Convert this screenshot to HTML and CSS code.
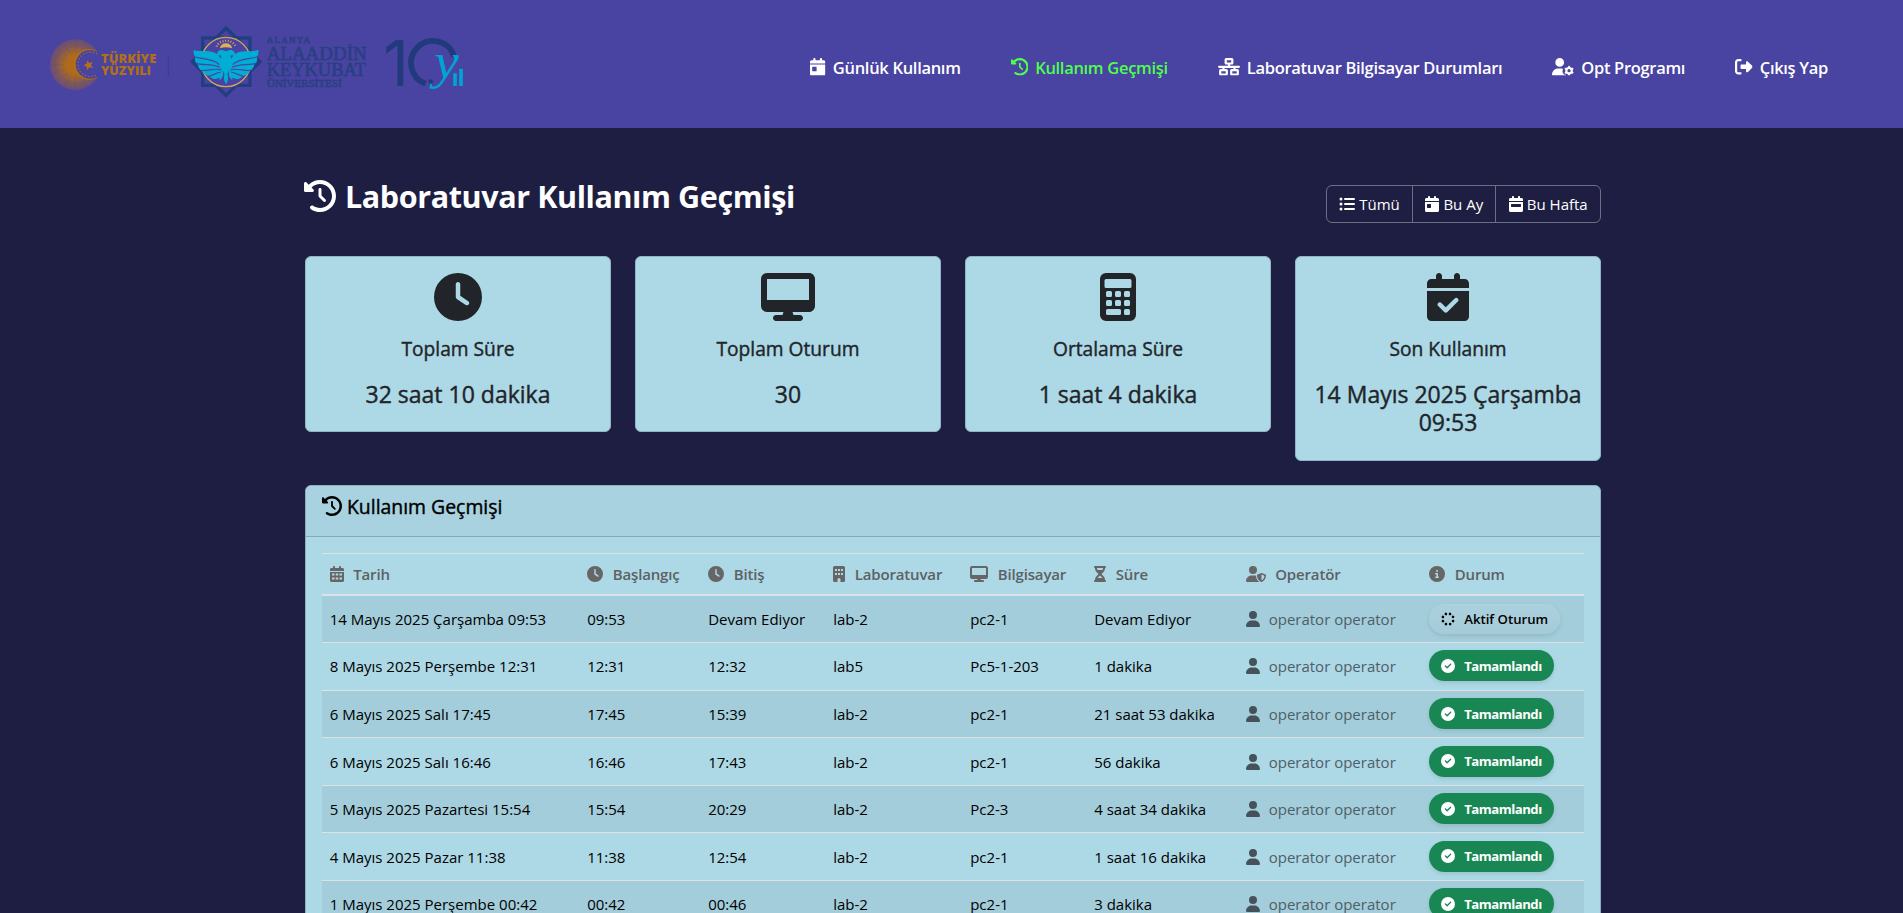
FILE: index.html
```html
<!DOCTYPE html>
<html lang="tr">
<head>
<meta charset="utf-8">
<title>Laboratuvar Kullanım Geçmişi</title>
<link rel="stylesheet" href="styles.css">
</head>
<body>
<svg class="sprite" aria-hidden="true">
  <symbol id="clock" viewBox="0 0 512 512"><path d="M256 0a256 256 0 1 1 0 512A256 256 0 1 1 256 0zM232 120l0 136c0 8 4 15.500 10.700 20l96 64c11 7.400 25.900 4.400 33.300-6.700s4.400-25.900-6.700-33.300L280 243.200 280 120c0-13.300-10.700-24-24-24s-24 10.700-24 24z"/></symbol>
  <symbol id="desktop" viewBox="0 0 576 512"><path d="M64 0C28.700 0 0 28.700 0 64L0 352c0 35.300 28.700 64 64 64l176 0-10.700 32L160 448c-17.700 0-32 14.300-32 32s14.300 32 32 32l256 0c17.700 0 32-14.300 32-32s-14.300-32-32-32l-69.300 0L336 416l176 0c35.300 0 64-28.700 64-64l0-288c0-35.300-28.700-64-64-64L64 0zM512 64l0 224L64 288 64 64l448 0z"/></symbol>
  <symbol id="calculator" viewBox="0 0 384 512"><path fill-rule="evenodd" d="M64 0h256a64 64 0 0 1 64 64v384a64 64 0 0 1-64 64H64a64 64 0 0 1-64-64V64A64 64 0 0 1 64 0zM64 64a16 16 0 0 0-16 16v64a16 16 0 0 0 16 16h256a16 16 0 0 0 16-16V80a16 16 0 0 0-16-16zM80 192a16 16 0 0 0-16 16v32a16 16 0 0 0 16 16h32a16 16 0 0 0 16-16v-32a16 16 0 0 0-16-16zM176 192a16 16 0 0 0-16 16v32a16 16 0 0 0 16 16h32a16 16 0 0 0 16-16v-32a16 16 0 0 0-16-16zM272 192a16 16 0 0 0-16 16v32a16 16 0 0 0 16 16h32a16 16 0 0 0 16-16v-32a16 16 0 0 0-16-16zM80 288a16 16 0 0 0-16 16v32a16 16 0 0 0 16 16h32a16 16 0 0 0 16-16v-32a16 16 0 0 0-16-16zM176 288a16 16 0 0 0-16 16v32a16 16 0 0 0 16 16h32a16 16 0 0 0 16-16v-32a16 16 0 0 0-16-16zM272 288a16 16 0 0 0-16 16v32a16 16 0 0 0 16 16h32a16 16 0 0 0 16-16v-32a16 16 0 0 0-16-16zM80 384a16 16 0 0 0-16 16v32a16 16 0 0 0 16 16h128a16 16 0 0 0 16-16v-32a16 16 0 0 0-16-16zM272 384a16 16 0 0 0-16 16v32a16 16 0 0 0 16 16h32a16 16 0 0 0 16-16v-32a16 16 0 0 0-16-16z"/></symbol>
  <symbol id="cal-check" viewBox="0 0 448 512"><path d="M128 0c17.700 0 32 14.300 32 32l0 32 128 0 0-32c0-17.700 14.300-32 32-32s32 14.300 32 32l0 32 48 0c26.500 0 48 21.500 48 48l0 48L0 160l0-48C0 85.500 21.500 64 48 64l48 0 0-32c0-17.700 14.300-32 32-32zM0 192l448 0 0 272c0 26.500-21.500 48-48 48L48 512c-26.500 0-48-21.500-48-48L0 192zM329 305c9.400-9.400 9.400-24.600 0-33.900s-24.600-9.400-33.900 0l-95 95-47-47c-9.400-9.400-24.600-9.400-33.900 0s-9.400 24.600 0 33.900l64 64c9.400 9.400 24.600 9.400 33.900 0L329 305z"/></symbol>
  <symbol id="cal-day" viewBox="0 0 448 512"><path fill-rule="evenodd" d="M128 0c17.700 0 32 14.300 32 32l0 32 128 0 0-32c0-17.700 14.300-32 32-32s32 14.300 32 32l0 32 48 0c26.500 0 48 21.500 48 48l0 48L0 160l0-48C0 85.500 21.500 64 48 64l48 0 0-32c0-17.700 14.300-32 32-32zM0 192l448 0 0 272c0 26.500-21.500 48-48 48L48 512c-26.500 0-48-21.500-48-48L0 192zM80 256c-8.800 0-16 7.200-16 16v96c0 8.800 7.200 16 16 16h96c8.800 0 16-7.200 16-16v-96c0-8.800-7.200-16-16-16z"/></symbol>
  <symbol id="cal-week" viewBox="0 0 448 512"><path fill-rule="evenodd" d="M128 0c17.700 0 32 14.300 32 32l0 32 128 0 0-32c0-17.700 14.300-32 32-32s32 14.300 32 32l0 32 48 0c26.500 0 48 21.500 48 48l0 48L0 160l0-48C0 85.500 21.500 64 48 64l48 0 0-32c0-17.700 14.300-32 32-32zM0 192l448 0 0 272c0 26.500-21.500 48-48 48L48 512c-26.500 0-48-21.500-48-48L0 192zM80 256c-8.800 0-16 7.200-16 16v64c0 8.800 7.200 16 16 16h288c8.800 0 16-7.200 16-16v-64c0-8.800-7.200-16-16-16z"/></symbol>
  <symbol id="cal-days" viewBox="0 0 448 512"><path fill-rule="evenodd" d="M128 0c17.700 0 32 14.300 32 32l0 32 128 0 0-32c0-17.700 14.300-32 32-32s32 14.300 32 32l0 32 48 0c26.500 0 48 21.500 48 48l0 48L0 160l0-48C0 85.500 21.500 64 48 64l48 0 0-32c0-17.700 14.300-32 32-32zM0 192l448 0 0 272c0 26.500-21.500 48-48 48L48 512c-26.500 0-48-21.500-48-48L0 192zM64 240h80v64H64zM184 240h80v64h-80zM304 240h80v64h-80zM64 368h80v64H64zM184 368h80v64h-80zM304 368h80v64h-80z"/></symbol>
  <symbol id="history" viewBox="0 0 512 512"><path d="M75 75L41 41C25.900 25.900 0 36.600 0 57.900L0 168c0 13.300 10.700 24 24 24l110.100 0c21.400 0 32.100-25.900 17-41l-30.800-30.800C155 85.500 203 64 256 64c106 0 192 86 192 192s-86 192-192 192c-40.800 0-78.600-12.700-109.700-34.400c-14.500-10.100-34.400-6.600-44.600 7.900s-6.600 34.400 7.900 44.600C151.200 495 201.700 512 256 512c141.400 0 256-114.600 256-256S397.400 0 256 0C185.300 0 121.300 28.700 75 75zm181 53c-13.300 0-24 10.700-24 24l0 104c0 6.400 2.500 12.500 7 17l72 72c9.400 9.400 24.600 9.400 33.900 0s9.400-24.600 0-33.900l-65-65 0-94.100c0-13.300-10.700-24-24-24z"/></symbol>
  <symbol id="network" viewBox="0 0 640 512"><path d="M256 64l128 0 0 64-128 0 0-64zM240 0c-26.500 0-48 21.500-48 48l0 96c0 26.500 21.500 48 48 48l48 0 0 32L32 224c-17.700 0-32 14.300-32 32s14.300 32 32 32l96 0 0 32-48 0c-26.500 0-48 21.500-48 48l0 96c0 26.500 21.500 48 48 48l160 0c26.500 0 48-21.500 48-48l0-96c0-26.500-21.500-48-48-48l-48 0 0-32 256 0 0 32-48 0c-26.500 0-48 21.500-48 48l0 96c0 26.500 21.500 48 48 48l160 0c26.500 0 48-21.500 48-48l0-96c0-26.500-21.500-48-48-48l-48 0 0-32 96 0c17.700 0 32-14.300 32-32s-14.300-32-32-32l-256 0 0-32 48 0c26.500 0 48-21.500 48-48l0-96c0-26.500-21.500-48-48-48L240 0zM96 448l0-64 128 0 0 64L96 448zm320-64l128 0 0 64-128 0 0-64z"/></symbol>
  <symbol id="user" viewBox="0 0 448 512"><path d="M224 256A128 128 0 1 0 224 0a128 128 0 1 0 0 256zm-45.700 48C79.800 304 0 383.800 0 482.300C0 498.700 13.300 512 29.700 512l388.600 0c16.400 0 29.700-13.300 29.700-29.700C448 383.800 368.200 304 269.700 304l-91.400 0z"/></symbol>
  <symbol id="user-gear" viewBox="0 0 640 512"><path d="M224 0a128 128 0 1 1 0 256A128 128 0 1 1 224 0zM178.300 304l91.400 0c11.800 0 23.400 1.200 34.500 3.300c-2.100 18.500 7.400 35.600 21.800 44.800c-16.600 10.600-26.700 31.600-20 53.300c4 12.900 9.400 25.500 16.400 37.600s15.200 23.100 24.400 33c15.700 16.900 39.600 18.400 57.200 8.700l0 .9c0 9.200 2.700 18.500 7.900 26.300L29.700 512C13.300 512 0 498.700 0 482.300C0 383.800 79.800 304 178.300 304z"/><g fill="none" stroke="currentColor"><circle cx="496" cy="368" r="78" stroke-width="62"/><path stroke-width="56" stroke-linecap="round" d="M496 252v16M496 468v16M395 310l14 8M583 418l14 8M597 310l-14 8M409 418l-14 8"/></g></symbol>
  <symbol id="user-shield" viewBox="0 0 640 512"><path d="M224 256A128 128 0 1 0 224 0a128 128 0 1 0 0 256zm-45.700 48C79.800 304 0 383.800 0 482.300C0 498.700 13.300 512 29.700 512l388.600 0c1.800 0 3.500-.2 5.300-.5c-76.300-55.100-99.800-141-103.100-200.200c-16.100-4.800-33.100-7.300-50.700-7.300l-91.400 0zm308.800-78.300l-120 48C358 277.400 352 286.200 352 296c0 63.300 25.900 168.800 134.800 214.200c5.900 2.500 12.600 2.500 18.500 0C614.100 464.800 640 359.300 640 296c0-9.800-6-18.600-15.100-22.300l-120-48c-5.700-2.300-12.100-2.300-17.800 0zM591.400 312c-3.900 50.700-27.200 116.700-95.400 149.700l0-187.800L591.400 312z"/></symbol>
  <symbol id="sign-out" viewBox="0 0 512 512"><path d="M377.900 105.900L500.700 228.700c7.200 7.200 11.300 17.100 11.300 27.300s-4.100 20.100-11.300 27.300L377.900 406.100c-6.400 6.400-15 9.900-24 9.900c-18.700 0-33.900-15.200-33.900-33.900l0-62.100-128 0c-17.700 0-32-14.300-32-32l0-64c0-17.700 14.300-32 32-32l128 0 0-62.100c0-18.700 15.200-33.900 33.900-33.900c9 0 17.600 3.600 24 9.900zM160 96L96 96c-17.700 0-32 14.300-32 32l0 256c0 17.700 14.300 32 32 32l64 0c17.700 0 32 14.300 32 32s-14.300 32-32 32l-64 0c-53 0-96-43-96-96L0 128C0 75 43 32 96 32l64 0c17.700 0 32 14.300 32 32s-14.300 32-32 32z"/></symbol>
  <symbol id="list" viewBox="0 0 512 512"><circle cx="64" cy="96" r="48"/><circle cx="64" cy="256" r="48"/><circle cx="64" cy="416" r="48"/><rect x="160" y="64" width="352" height="64" rx="32"/><rect x="160" y="224" width="352" height="64" rx="32"/><rect x="160" y="384" width="352" height="64" rx="32"/></symbol>
  <symbol id="building" viewBox="0 0 384 512"><path fill-rule="evenodd" d="M48 0h288a48 48 0 0 1 48 48v416a48 48 0 0 1-48 48h-96v-80a48 48 0 0 0-96 0v80H48a48 48 0 0 1-48-48V48A48 48 0 0 1 48 0zM64 96v64h64V96zM160 96v64h64V96zM256 96v64h64V96zM64 224v64h64v-64zM160 224v64h64v-64zM256 224v64h64v-64z"/></symbol>
  <symbol id="hourglass" viewBox="0 0 384 512"><path fill-rule="evenodd" d="M32 0h320a32 32 0 0 1 0 64v11c0 42-17 83-47 113l-68 68 68 68c30 30 47 71 47 113v11a32 32 0 0 1 0 64H32a32 32 0 0 1 0-64v-11c0-42 17-83 47-113l68-68-68-68C49 158 32 117 32 75V64a32 32 0 0 1 0-64zM96 64v11c0 19 6 37 16 53h160c10-16 16-34 16-53V64zM112 384h160c-4-5-8-10-12-15l-68-68-68 68c-4 5-9 10-12 15z"/></symbol>
  <symbol id="info" viewBox="0 0 512 512"><path fill-rule="evenodd" d="M256 0a256 256 0 1 1 0 512A256 256 0 1 1 256 0zM216 336a24 24 0 0 0 0 48h80a24 24 0 0 0 0-48h-8v-88a24 24 0 0 0-24-24h-48a24 24 0 0 0 0 48h24v64zM256 128a32 32 0 1 0 0 64 32 32 0 1 0 0-64z"/></symbol>
  <symbol id="check" viewBox="0 0 512 512"><path d="M256 512A256 256 0 1 0 256 0a256 256 0 1 0 0 512zM369 209L241 337c-9.400 9.400-24.600 9.400-33.900 0l-64-64c-9.400-9.400-9.400-24.600 0-33.900s24.600-9.400 33.900 0l47 47L335 175c9.400-9.400 24.600-9.400 33.900 0s9.400 24.600 0 33.900z"/></symbol>
  <symbol id="spinner" viewBox="0 0 512 512"><g transform="rotate(22 256 256)"><circle cx="256" cy="56" r="48"/><circle cx="256" cy="456" r="48"/><circle cx="56" cy="256" r="48"/><circle cx="456" cy="256" r="48"/><circle cx="115" cy="115" r="48"/><circle cx="397" cy="115" r="48"/><circle cx="115" cy="397" r="48"/><circle cx="397" cy="397" r="48"/></g></symbol>
</svg>

<header class="topbar">
  <svg class="logo" viewBox="0 0 1380 330" role="img" aria-label="Alanya Alaaddin Keykubat Üniversitesi">
    <defs>
      <radialGradient id="sun" gradientUnits="userSpaceOnUse" cx="136" cy="164" r="77">
        <stop offset=".35" stop-color="#b06a19"/><stop offset=".65" stop-color="#a0652f" stop-opacity=".8"/><stop offset="1" stop-color="#8c5b50" stop-opacity=".5"/>
      </radialGradient>
      <g id="wing">
        <path fill="#00aed5" d="M491 120C512 128 542 116 563 134C576 146 584 166 580 186C575 200 566 207 552 207C546 206 541 202 538 198C530 199 521 192 518 184C510 181 504 173 503 163C497 157 493 150 495 141C491 134 490 126 491 120z"/>
        <path fill="none" stroke="#4943a1" stroke-width="3.500" d="M490 139C515 150 545 142 568 164M498 160C520 167 546 160 570 172M511 181C532 184 552 174 574 179M532 200C548 198 560 186 577 186"/>
        <path fill="#00aed5" d="M584 122C570 116 558 124 560 142C564 136 568 134 574 137C571 146 573 158 577 168C579 178 580 190 588 196V124z"/>
        <path fill="#00aed5" d="M578 183C570 186 566 198 569 210C578 204 582 194 578 183z"/>
      </g>
    </defs>
    <circle cx="136" cy="164" r="76" fill="url(#sun)"/>
    <g fill="none" stroke="#4943a1" stroke-width="1" opacity=".55">
      <circle cx="136" cy="164" r="72"/><circle cx="136" cy="164" r="66"/><circle cx="136" cy="164" r="60"/><circle cx="136" cy="164" r="54"/>
      <path d="M60 164h40M64 136l40 14M64 192l40-14M78 112l36 28M78 216l36-28M100 94l20 36M100 234l20-36M136 88v36M136 240v-36M170 94l-20 36M170 234l-20-36"/>
    </g>
    <circle cx="177" cy="163" r="46" fill="#b5700f"/>
    <circle cx="180" cy="163" r="43" fill="#4943a1"/>
    <path d="M201 80h30v170h-30z" fill="#4943a1"/>
    <path d="M201 132A37 37 0 1 0 201 194" fill="none" stroke="#a86a20" stroke-width="4" stroke-dasharray="4 6"/>
    <path d="M172 151l6 8 10-3-5 9 6 9-11-2-7 9-1-11-10-4 10-5z" fill="#b86e12"/>
    <g class="logo-sans" fill="#b06f1b">
      <text x="213" y="159" textLength="166" lengthAdjust="spacingAndGlyphs">TÜRKİYE</text>
      <text x="213" y="195" textLength="150" lengthAdjust="spacingAndGlyphs">YÜZYILI</text>
    </g>
    <path d="M415 136v64" stroke="#403b87" stroke-width="3"/>
    <g fill="none" stroke="#213f80" stroke-width="10">
      <path d="M588 54L690 155 588 256 487 155z"/>
      <rect x="518" y="84" width="142" height="142"/>
    </g>
    <circle cx="588" cy="156" r="76" fill="#4943a1"/>
    <circle cx="588" cy="156" r="74" fill="none" stroke="#d2a45d" stroke-width="4"/>
    <path d="M570 115a18 15 0 0 1 36 0q-18-6-36 0z" fill="#e0b152"/>
    <path d="M560 110A30 26 0 0 1 617 110" fill="none" stroke="#d2a45d" stroke-width="7" stroke-dasharray="3 5"/>
    <use href="#wing"/><use href="#wing" transform="matrix(-1 0 0 1 1176 0)"/>
    <path d="M588 182c-8 14-8 28 0 41 8-13 8-27 0-41z" fill="#00aed5"/>
    <g class="logo-serif" fill="#283f81">
      <text x="710" y="99" font-size="27" textLength="130">ALANYA</text>
      <text x="710" y="149" font-size="55" textLength="300" lengthAdjust="spacingAndGlyphs">ALAADDİN</text>
      <text x="710" y="198" font-size="55" textLength="298" lengthAdjust="spacingAndGlyphs">KEYKUBAT</text>
      <text x="710" y="231" font-size="31" textLength="225" lengthAdjust="spacingAndGlyphs">ÜNİVERSİTESİ</text>
    </g>
    <text class="logo-one" x="1060" y="228" fill="#213a7c">1</text>
    <path d="M1187 221A66 66 0 1 1 1272 139" fill="none" stroke="#213a7c" stroke-width="17"/>
    <circle cx="1202" cy="215" r="7" fill="#213a7c"/>
    <text class="logo-y" x="1212" y="205" textLength="74" lengthAdjust="spacingAndGlyphs" fill="#00a3d3">y</text>
    <path d="M1275 190v38M1293 176v52" stroke="#00a3d3" stroke-width="11"/>
  </svg>
  <nav class="nav">
    <a><svg class="w14"><use href="#cal-day"/></svg><span>Günlük Kullanım</span></a>
    <a class="active"><svg class="w16"><use href="#history"/></svg><span>Kullanım Geçmişi</span></a>
    <a><svg class="w20"><use href="#network"/></svg><span>Laboratuvar Bilgisayar Durumları</span></a>
    <a><svg class="w20"><use href="#user-gear"/></svg><span>Opt Programı</span></a>
    <a><svg class="w16"><use href="#sign-out"/></svg><span>Çıkış Yap</span></a>
  </nav>
</header>

<main class="container">
  <div class="heading">
    <h1><svg><use href="#history"/></svg><span>Laboratuvar Kullanım Geçmişi</span></h1>
    <div class="filters">
      <a><svg class="w16"><use href="#list"/></svg><span>Tümü</span></a>
      <a><svg class="w14"><use href="#cal-day"/></svg><span>Bu Ay</span></a>
      <a><svg class="w14"><use href="#cal-week"/></svg><span>Bu Hafta</span></a>
    </div>
  </div>

  <section class="stats">
    <div class="stat"><svg><use href="#clock"/></svg><h5>Toplam Süre</h5><h4>32 saat 10 dakika</h4></div>
    <div class="stat"><svg class="wide"><use href="#desktop"/></svg><h5>Toplam Oturum</h5><h4>30</h4></div>
    <div class="stat"><svg><use href="#calculator"/></svg><h5>Ortalama Süre</h5><h4>1 saat 4 dakika</h4></div>
    <div class="stat"><svg><use href="#cal-check"/></svg><h5>Son Kullanım</h5><h4>14 Mayıs 2025 Çarşamba<br>09:53</h4></div>
  </section>

  <section class="panel">
    <h5 class="panel-head"><svg><use href="#history"/></svg><span>Kullanım Geçmişi</span></h5>
    <div class="panel-body">
      <div class="row head">
        <div><svg class="w14"><use href="#cal-days"/></svg>Tarih</div>
        <div><svg class="w16"><use href="#clock"/></svg>Başlangıç</div>
        <div><svg class="w16"><use href="#clock"/></svg>Bitiş</div>
        <div><svg class="w12"><use href="#building"/></svg>Laboratuvar</div>
        <div><svg class="w18"><use href="#desktop"/></svg>Bilgisayar</div>
        <div><svg class="w12"><use href="#hourglass"/></svg>Süre</div>
        <div><svg class="w20"><use href="#user-shield"/></svg>Operatör</div>
        <div><svg class="w16"><use href="#info"/></svg>Durum</div>
      </div>
      <div class="row"><div>14 Mayıs 2025 Çarşamba 09:53</div><div>09:53</div><div>Devam Ediyor</div><div>lab-2</div><div>pc2-1</div><div>Devam Ediyor</div><div class="op"><svg class="w14"><use href="#user"/></svg>operator operator</div><div><span class="badge live"><svg><use href="#spinner"/></svg>Aktif Oturum</span></div></div>
      <div class="row"><div>8 Mayıs 2025 Perşembe 12:31</div><div>12:31</div><div>12:32</div><div>lab5</div><div>Pc5-1-203</div><div>1 dakika</div><div class="op"><svg class="w14"><use href="#user"/></svg>operator operator</div><div><span class="badge"><svg><use href="#check"/></svg>Tamamlandı</span></div></div>
      <div class="row"><div>6 Mayıs 2025 Salı 17:45</div><div>17:45</div><div>15:39</div><div>lab-2</div><div>pc2-1</div><div>21 saat 53 dakika</div><div class="op"><svg class="w14"><use href="#user"/></svg>operator operator</div><div><span class="badge"><svg><use href="#check"/></svg>Tamamlandı</span></div></div>
      <div class="row"><div>6 Mayıs 2025 Salı 16:46</div><div>16:46</div><div>17:43</div><div>lab-2</div><div>pc2-1</div><div>56 dakika</div><div class="op"><svg class="w14"><use href="#user"/></svg>operator operator</div><div><span class="badge"><svg><use href="#check"/></svg>Tamamlandı</span></div></div>
      <div class="row"><div>5 Mayıs 2025 Pazartesi 15:54</div><div>15:54</div><div>20:29</div><div>lab-2</div><div>Pc2-3</div><div>4 saat 34 dakika</div><div class="op"><svg class="w14"><use href="#user"/></svg>operator operator</div><div><span class="badge"><svg><use href="#check"/></svg>Tamamlandı</span></div></div>
      <div class="row"><div>4 Mayıs 2025 Pazar 11:38</div><div>11:38</div><div>12:54</div><div>lab-2</div><div>pc2-1</div><div>1 saat 16 dakika</div><div class="op"><svg class="w14"><use href="#user"/></svg>operator operator</div><div><span class="badge"><svg><use href="#check"/></svg>Tamamlandı</span></div></div>
      <div class="row"><div>1 Mayıs 2025 Perşembe 00:42</div><div>00:42</div><div>00:46</div><div>lab-2</div><div>pc2-1</div><div>3 dakika</div><div class="op"><svg class="w14"><use href="#user"/></svg>operator operator</div><div><span class="badge"><svg><use href="#check"/></svg>Tamamlandı</span></div></div>
    </div>
  </section>
</main>
</body>
</html>
```
FILE: styles.css
```css
* { box-sizing: border-box; }
html, body { height: 100%; }
body {
  margin: 0;
  overflow: hidden;
  background: #1e1e42;
  color: #212529;
  font-family: "Open Sans", "Noto Sans", sans-serif;
  font-size: 15px;
}
svg { fill: currentColor; flex: none; }
.sprite { display: none; }
h1, h4, h5 { margin: 0; }

.topbar {
  height: 128px;
  background: #4943a1;
  display: flex;
  justify-content: space-between;
  align-items: flex-start;
  padding: 10px 75px 0 30px;
}
.logo { width: 460px; height: 110px; }
.logo-sans { font: 800 36px "Open Sans", sans-serif; }
.logo-serif { font-family: "Liberation Serif", serif; }
.logo-serif text { stroke: #283f81; stroke-width: 1.4px; }
.logo-one { font: 198px "Liberation Sans", sans-serif; font-family: "Inter", sans-serif; font-size: 188px; }
.logo-y { font: italic 150px "Liberation Serif", serif; }

.nav { display: flex; gap: 50px; padding-top: 43px; }
.nav a {
  display: flex;
  align-items: center;
  gap: 7px;
  height: 28px;
  color: #fff;
  font-size: 16.5px;
  font-weight: 600;
  letter-spacing: -.31px;
  white-space: nowrap;
}
.nav svg { height: 17.6px; }
.nav .w14 { width: 15.4px; }
.nav .w16 { width: 17.6px; }
.nav .w20 { width: 22px; }
.nav .active { color: #4dff4d; }

.w12 { width: 12px; height: 16px; }
.w14 { width: 14px; height: 16px; }
.w16 { width: 16px; height: 16px; }
.w18 { width: 18px; height: 16px; }
.w20 { width: 20px; height: 16px; }

.container { width: 1296px; margin: 0 0 0 305px; padding-top: 48px; }
.heading { display: flex; justify-content: space-between; height: 80px; }
.heading h1 {
  display: flex;
  align-items: center;
  gap: 9px;
  height: 40px;
  margin-left: -1px;
  color: #fff;
  font-size: 30.5px;
  font-weight: 700;
  letter-spacing: -.4px;
}
.heading h1 svg { width: 32px; height: 32px; }
.filters {
  display: flex;
  height: 38px;
  margin-top: 9px;
  border: 1px solid #6c6f83;
  border-radius: 6px;
}
.filters a {
  display: flex;
  align-items: center;
  gap: 4px;
  padding: 0 12.3px;
  color: #fff;
}
.filters a + a { border-left: 1px solid #6c6f83; }

.stats { display: grid; grid-template-columns: repeat(4, 306px); gap: 24px; align-items: start; }
.stat {
  display: flex;
  flex-direction: column;
  align-items: center;
  padding: 16px 16px 22.4px;
  border: 1px solid #91b5c5;
  border-radius: 6px;
  background: #add8e6;
  text-align: center;
}
.stat svg { width: 48px; height: 48px; }
.stat svg.wide { width: 54px; }
.stat h5, .stat h4, .panel-head span { -webkit-text-stroke: .4px currentColor; }
.stat h5 { margin-top: 16px; font-size: 19.2px; font-weight: 500; line-height: 24px; white-space: nowrap; }
.stat h4 { margin-top: 18.6px; font-size: 23px; font-weight: 500; line-height: 28.8px; white-space: nowrap; }

.panel {
  margin-top: 24px;
  border: 1px solid #8aafc0;
  border-radius: 6px;
  background: #add8e6;
  overflow: hidden;
}
.panel-head {
  display: flex;
  gap: 5px;
  height: 51px;
  padding: 9px 16px 0;
  border-bottom: 1px solid #86a9b8;
  background: #a8d2e0;
  color: #000;
  font-size: 19.4px;
  font-weight: 500;
  line-height: 24px;
}
.panel-head svg { width: 20px; height: 20px; margin-top: 1px; }
.panel-body { padding: 16px 16px 0; }

.row {
  display: grid;
  grid-template-columns: 257.5px 121px 125px 137px 124px 151.5px 183.5px 1fr;
  height: 47.58px;
  border-bottom: 1px solid #dee2e6;
  color: #000;
}
.row > div { display: flex; align-items: center; padding: 0 7.7px; white-space: nowrap; }
.row:nth-child(even) { background: #a3cdda; }
.row.head {
  height: 43px;
  border-top: 1px solid #dee2e6;
  border-bottom-width: 2px;
  color: #5c6163;
  font-weight: 600;
  letter-spacing: -.15px;
}
.row.head svg { margin-right: 9.5px; color: #666; }
.row .op { color: #4f5e67; }
.op svg { margin-right: 9px; color: #45525b; }

.badge {
  display: flex;
  align-items: center;
  height: 31px;
  margin-bottom: 1px;
  padding: 0 12px;
  border-radius: 16px;
  background: #198754;
  box-shadow: 0 2px 4px rgba(0, 0, 0, .1);
  color: #fff;
  font-size: 13.2px;
  font-weight: 700;
  letter-spacing: -.5px;
}
.badge svg { width: 14px; height: 14px; margin-right: 9px; }
.badge.live { height: 30px; margin-bottom: 0; background: linear-gradient(#acd1de, #a5cbd8); color: #000; font-weight: 600; letter-spacing: 0; }
```
